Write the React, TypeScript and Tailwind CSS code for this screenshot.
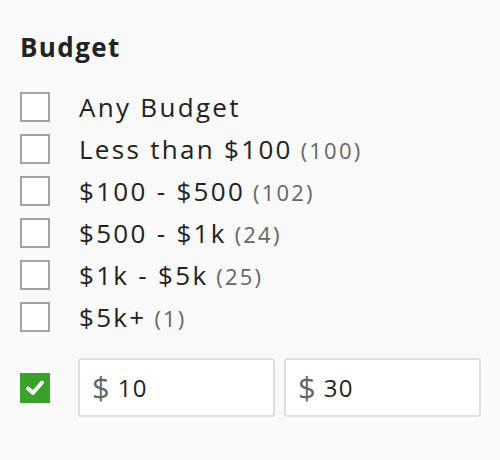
import React from "react";

const options = [
  { label: "Any Budget", count: null },
  { label: "Less than $100", count: 100 },
  { label: "$100 - $500", count: 102 },
  { label: "$500 - $1k", count: 24 },
  { label: "$1k - $5k", count: 25 },
  { label: "$5k+", count: 1 },
];

function Box() {
  return <span className="w-[30px] h-[30px] shrink-0 border-2 border-[#a3a3a3] bg-white" />;
}

export default function App() {
  return (
    <div
      className="w-[500px] h-[460px] bg-[#f9f9f9] text-[#222] pl-5 pt-[32px]"
      style={{ fontFamily: '"Open Sans", "Liberation Sans", sans-serif' }}
    >
      <h2 className="text-[26px] font-bold leading-[30px] tracking-[1.4px]">Budget</h2>

      <div className="mt-[30px] flex flex-col gap-3">
        {options.map((o) => (
          <label key={o.label} className="flex items-center h-[30px]">
            <Box />
            <span className="ml-[29px] text-[26px] tracking-[2.3px] whitespace-nowrap">
              {o.label}
              {o.count !== null && (
                <span className="text-[22px] tracking-[2.2px] text-[#666]"> ({o.count})</span>
              )}
            </span>
          </label>
        ))}
      </div>

      <div className="mt-[26px] flex items-center">
        <span className="w-[30px] h-[30px] shrink-0 bg-[#3aa12a] flex items-center justify-center">
          <svg width="20" height="18" viewBox="0 0 20 18" fill="none">
            <path d="M3 9.5 L8 14 L17 3.5" stroke="white" strokeWidth="3.8" strokeLinecap="round" strokeLinejoin="round" />
          </svg>
        </span>
        <div className="ml-[28px] flex gap-[9px]">
          {["10", "30"].map((v) => (
            <div key={v} className="w-[197px] h-[59px] bg-white border-2 border-[#e0e0e0] rounded-[3px] flex items-center pl-[12px]">
              <span className="text-[31px] text-[#666]">$</span>
              <span className="ml-[8px] text-[24px] tracking-[1.2px] text-[#222]">{v}</span>
            </div>
          ))}
        </div>
      </div>
    </div>
  );
}
